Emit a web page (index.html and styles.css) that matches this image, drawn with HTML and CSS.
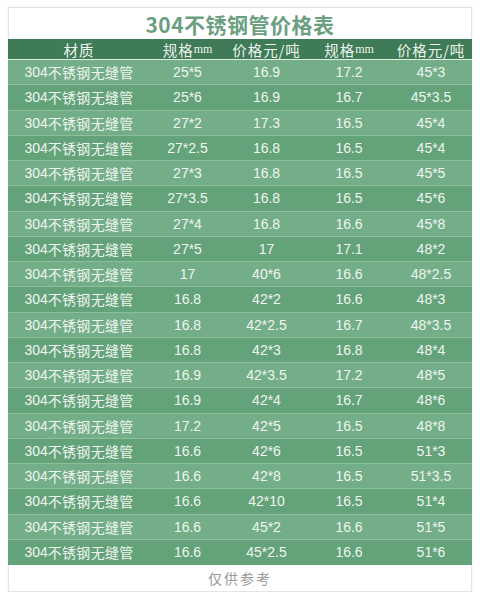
FILE: index.html
```html
<!DOCTYPE html>
<html lang="zh">
<head>
<meta charset="utf-8">
<link rel="stylesheet" href="styles.css">
</head>
<body>
<div class="sheet">
  <div class="title">304不锈钢管价格表</div>
  <div class="head">
    <div>材质</div>
    <div>规格<span class="mm">mm</span></div>
    <div>价格元/吨</div>
    <div>规格<span class="mm">mm</span></div>
    <div>价格元/吨</div>
  </div>
  <div class="body">
    <div class="row"><div class="mat">304<span class="cjk">不锈钢无缝管</span></div><div>25*5</div><div>16.9</div><div>17.2</div><div>45*3</div></div>
    <div class="row"><div class="mat">304<span class="cjk">不锈钢无缝管</span></div><div>25*6</div><div>16.9</div><div>16.7</div><div>45*3.5</div></div>
    <div class="row"><div class="mat">304<span class="cjk">不锈钢无缝管</span></div><div>27*2</div><div>17.3</div><div>16.5</div><div>45*4</div></div>
    <div class="row"><div class="mat">304<span class="cjk">不锈钢无缝管</span></div><div>27*2.5</div><div>16.8</div><div>16.5</div><div>45*4</div></div>
    <div class="row"><div class="mat">304<span class="cjk">不锈钢无缝管</span></div><div>27*3</div><div>16.8</div><div>16.5</div><div>45*5</div></div>
    <div class="row"><div class="mat">304<span class="cjk">不锈钢无缝管</span></div><div>27*3.5</div><div>16.8</div><div>16.5</div><div>45*6</div></div>
    <div class="row"><div class="mat">304<span class="cjk">不锈钢无缝管</span></div><div>27*4</div><div>16.8</div><div>16.6</div><div>45*8</div></div>
    <div class="row"><div class="mat">304<span class="cjk">不锈钢无缝管</span></div><div>27*5</div><div>17</div><div>17.1</div><div>48*2</div></div>
    <div class="row"><div class="mat">304<span class="cjk">不锈钢无缝管</span></div><div>17</div><div>40*6</div><div>16.6</div><div>48*2.5</div></div>
    <div class="row"><div class="mat">304<span class="cjk">不锈钢无缝管</span></div><div>16.8</div><div>42*2</div><div>16.6</div><div>48*3</div></div>
    <div class="row"><div class="mat">304<span class="cjk">不锈钢无缝管</span></div><div>16.8</div><div>42*2.5</div><div>16.7</div><div>48*3.5</div></div>
    <div class="row"><div class="mat">304<span class="cjk">不锈钢无缝管</span></div><div>16.8</div><div>42*3</div><div>16.8</div><div>48*4</div></div>
    <div class="row"><div class="mat">304<span class="cjk">不锈钢无缝管</span></div><div>16.9</div><div>42*3.5</div><div>17.2</div><div>48*5</div></div>
    <div class="row"><div class="mat">304<span class="cjk">不锈钢无缝管</span></div><div>16.9</div><div>42*4</div><div>16.7</div><div>48*6</div></div>
    <div class="row"><div class="mat">304<span class="cjk">不锈钢无缝管</span></div><div>17.2</div><div>42*5</div><div>16.5</div><div>48*8</div></div>
    <div class="row"><div class="mat">304<span class="cjk">不锈钢无缝管</span></div><div>16.6</div><div>42*6</div><div>16.5</div><div>51*3</div></div>
    <div class="row"><div class="mat">304<span class="cjk">不锈钢无缝管</span></div><div>16.6</div><div>42*8</div><div>16.5</div><div>51*3.5</div></div>
    <div class="row"><div class="mat">304<span class="cjk">不锈钢无缝管</span></div><div>16.6</div><div>42*10</div><div>16.5</div><div>51*4</div></div>
    <div class="row"><div class="mat">304<span class="cjk">不锈钢无缝管</span></div><div>16.6</div><div>45*2</div><div>16.6</div><div>51*5</div></div>
    <div class="row"><div class="mat">304<span class="cjk">不锈钢无缝管</span></div><div>16.6</div><div>45*2.5</div><div>16.6</div><div>51*6</div></div>
  </div>
  <div class="foot">仅供参考</div>
</div>
</body>
</html>
```
FILE: styles.css
```css
html, body {
  margin: 0;
  padding: 0;
  background: #ffffff;
}

.sheet {
  width: 464px;
  margin: 7px 0 0 8px;
  font-family: "Liberation Sans", "Noto Sans CJK SC", sans-serif;
  box-shadow: 0 0 2px rgba(0, 0, 0, 0.08);
}

.title {
  height: 31px;
  border: 1px solid #e4e4e4;
  border-bottom: none;
  display: flex;
  align-items: center;
  justify-content: center;
  font-family: "Noto Sans CJK SC", sans-serif;
  font-weight: bold;
  font-size: 21px;
  color: #6c9f80;
  letter-spacing: 0.5px;
}

.head,
.row {
  display: grid;
  grid-template-columns: 142px 75px 83px 82px 82px;
}

.head {
  height: 20px;
  background: #3f7b57;
  border-bottom: 1px solid #dfeee3;
  color: #eef5ef;
  font-family: "Noto Sans CJK SC", serif;
  font-size: 14.5px;
  letter-spacing: 1px;
}

.head > div {
  display: flex;
  align-items: center;
  justify-content: center;
}

.head .mm {
  font-family: "Liberation Serif", serif;
  font-size: 12px;
  letter-spacing: 0;
}

.row {
  height: 24.25px;
  border-bottom: 1px solid #8dbf9d;
  background: #74ae88;
  color: #eef5f0;
  font-size: 14px;
}

.row:nth-child(even) {
  background: #64a37a;
}

.row:last-child {
  border-bottom: none;
  height: 25.25px;
}

.row > div {
  display: flex;
  align-items: center;
  justify-content: center;
}

.mat .cjk {
  font-family: "Noto Sans CJK SC", sans-serif;
  font-size: 14px;
  letter-spacing: 0.3px;
}

.foot {
  height: 26px;
  border: 1px solid #e4e4e4;
  border-top: none;
  display: flex;
  align-items: center;
  justify-content: center;
  font-family: "Noto Sans CJK SC", serif;
  font-size: 14px;
  letter-spacing: 2px;
  color: #9a9a9a;
}
```
